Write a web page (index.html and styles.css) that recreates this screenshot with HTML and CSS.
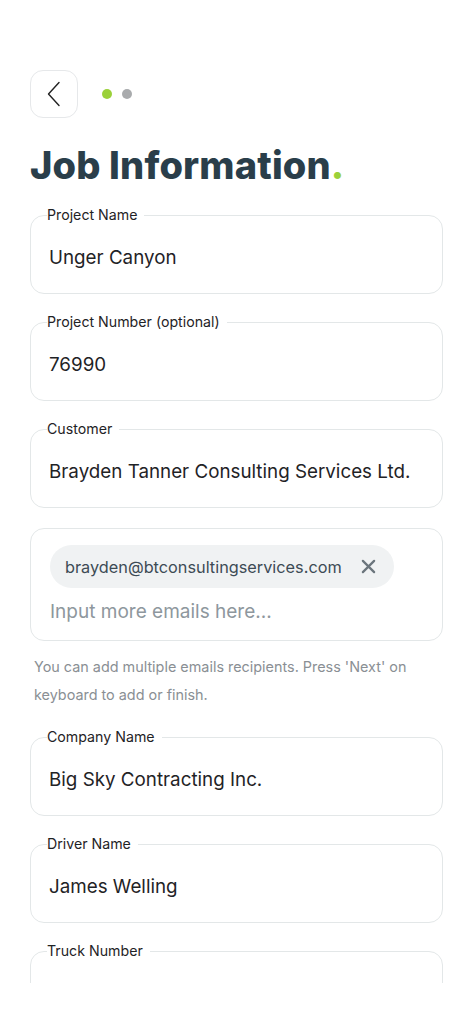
FILE: index.html
```html
<!DOCTYPE html>
<html lang="en">
<head>
  <meta charset="UTF-8" />
  <title>Job Information</title>
  <link rel="stylesheet" href="styles.css">
</head>
<body>
  <div class="screen">

    <div class="topbar">
      <button class="back" type="button" aria-label="Back">
        <svg width="16" height="26" viewBox="0 0 16 26" fill="none" stroke="#222" stroke-width="1.4" stroke-linecap="round" stroke-linejoin="round">
          <path d="M13 1.5 L2.5 13 L13 24.5" />
        </svg>
      </button>
      <div class="steps">
        <span class="dot active"></span>
        <span class="dot"></span>
      </div>
    </div>

    <h1>Job Information<span class="accent">.</span></h1>

    <form class="job-form">
      <fieldset class="field">
        <legend>Project Name</legend>
        <div class="value">Unger Canyon</div>
      </fieldset>

      <fieldset class="field">
        <legend>Project Number (optional)</legend>
        <div class="value">76990</div>
      </fieldset>

      <fieldset class="field">
        <legend>Customer</legend>
        <div class="value">Brayden Tanner Consulting Services Ltd.</div>
      </fieldset>

      <div class="emails">
        <div class="chip">
          <span>brayden@btconsultingservices.com</span>
          <svg width="15" height="15" viewBox="0 0 16 16" stroke="#6b757c" stroke-width="2.4" stroke-linecap="round">
            <path d="M2 2 L14 14 M14 2 L2 14" />
          </svg>
        </div>
        <div class="placeholder">Input more emails here...</div>
      </div>
      <p class="hint">You can add multiple emails recipients. Press 'Next' on keyboard to add or finish.</p>

      <fieldset class="field">
        <legend>Company Name</legend>
        <div class="value">Big Sky Contracting Inc.</div>
      </fieldset>

      <fieldset class="field">
        <legend>Driver Name</legend>
        <div class="value">James Welling</div>
      </fieldset>

      <fieldset class="field">
        <legend>Truck Number</legend>
        <div class="value"></div>
      </fieldset>
    </form>

  </div>
</body>
</html>
```

FILE: styles.css
```css
* {
  box-sizing: border-box;
}

body {
  margin: 0;
  background: #fff;
  font-family: Inter, 'Liberation Sans', sans-serif;
  color: #1f2326;
}

.screen {
  height: 983px;
  overflow: hidden;
  padding: 70px 30px 0 30px;
}

.topbar {
  display: flex;
  align-items: center;
  gap: 24px;
}

.back {
  width: 48px;
  height: 48px;
  border: 1px solid #e6e8ea;
  border-radius: 13px;
  background: #fff;
  display: flex;
  align-items: center;
  justify-content: center;
  padding: 0;
}

.steps {
  display: flex;
  gap: 10px;
}

.dot {
  width: 10px;
  height: 10px;
  border-radius: 50%;
  background: #a9abad;
}

.dot.active {
  background: #9bd13a;
}

h1 {
  margin: 24px 0 19px 0;
  font-size: 38px;
  font-weight: 800;
  letter-spacing: 0.15px;
  color: #2a3e4a;
  line-height: 46px;
}

.accent {
  color: #9bd13a;
}

.job-form {
  display: flex;
  flex-direction: column;
  gap: 20px;
}

.field {
  margin: 0;
  border: 1px solid #e3e7e8;
  border-radius: 14px;
  padding: 0 18px 0 18px;
  height: 87px;
}

.field legend {
  margin-left: -2px;
  padding: 0 7px 0 0;
  font-size: 14.2px;
  line-height: 16px;
  color: #1f2326;
}

.value {
  font-size: 18.8px;
  line-height: 24px;
  padding-top: 23px;
  color: #1f2326;
}

.emails {
  border: 1px solid #e3e7e8;
  border-radius: 14px;
  padding: 16px 20px 16px 19px;
}

.chip {
  display: inline-flex;
  align-items: center;
  gap: 19px;
  height: 43px;
  padding: 0 18px 0 15px;
  border-radius: 22px;
  background: #f0f2f3;
  font-size: 16.3px;
  color: #3d4b55;
}

.placeholder {
  margin-top: 12px;
  font-size: 19px;
  line-height: 24px;
  color: #8e979d;
}

.hint {
  margin: -8px 0 0 4px;
  font-size: 14.4px;
  line-height: 28px;
  color: #8a8f94;
}
```
